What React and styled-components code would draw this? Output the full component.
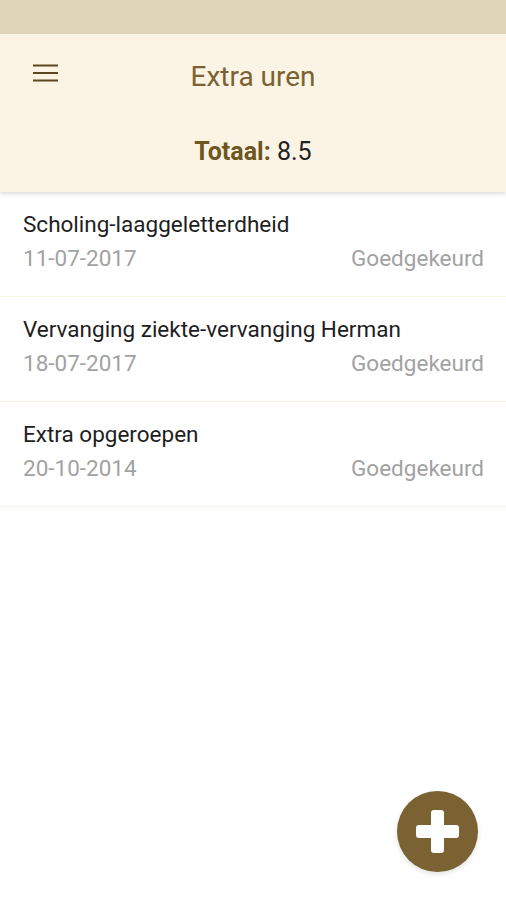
import React from "react";
import styled, { createGlobalStyle } from "styled-components";

const GlobalStyle = createGlobalStyle`
  html, body {
    margin: 0;
    padding: 0;
    background: #ffffff;
    font-family: Roboto, "Noto Sans", sans-serif;
  }
`;

const Screen = styled.div`
  position: relative;
  width: 506px;
  height: 900px;
  overflow: hidden;
  background: #ffffff;
`;

const StatusBar = styled.div`
  height: 34px;
  background: #e0d5b9;
`;

const Header = styled.header`
  background: #fbf4e4;
  box-shadow: 0 2px 4px rgba(0, 0, 0, 0.14);
  position: relative;
  z-index: 1;
`;

const Toolbar = styled.div`
  height: 84px;
  display: grid;
  grid-template-columns: 92px 1fr 92px;
  align-items: center;
`;

const MenuButton = styled.button`
  border: none;
  background: none;
  padding: 0 0 0 33px;
  height: 84px;
  display: flex;
  align-items: center;
  margin-top: -6px;
  cursor: pointer;
`;

const Title = styled.h1`
  margin: 0;
  text-align: center;
  font-size: 28px;
  font-weight: 400;
  color: #7a6233;
`;

const Total = styled.div`
  padding: 20px 0 26px;
  line-height: 28px;
  text-align: center;
  font-size: 25px;
  color: #222;
`;

const TotalLabel = styled.strong`
  font-weight: 700;
  color: #6f5522;
`;

const List = styled.ul`
  list-style: none;
  margin: 0;
  padding: 0;
`;

const Row = styled.li`
  height: 105px;
  box-sizing: border-box;
  padding: 19px 22px 0 23px;
  border-bottom: 1.5px solid #f8f3e3;
`;

const RowTitle = styled.div`
  font-size: 22.5px;
  line-height: 26px;
  color: #1e1e1e;
`;

const RowMeta = styled.div`
  margin-top: 8px;
  display: flex;
  justify-content: space-between;
  font-size: 22.5px;
  line-height: 26px;
  color: #a2a2a2;
`;

const Fab = styled.button`
  position: absolute;
  left: 397px;
  top: 791px;
  width: 81px;
  height: 81px;
  border-radius: 50%;
  border: none;
  background: #7b6232;
  display: flex;
  align-items: center;
  justify-content: center;
  box-shadow: 0 2px 5px rgba(0, 0, 0, 0.12);
  cursor: pointer;
`;

const items = [
  { title: "Scholing-laaggeletterdheid", date: "11-07-2017", status: "Goedgekeurd" },
  { title: "Vervanging ziekte-vervanging Herman", date: "18-07-2017", status: "Goedgekeurd" },
  { title: "Extra opgeroepen", date: "20-10-2014", status: "Goedgekeurd" },
];

const App = () => {
  return (
    <>
      <GlobalStyle />
      <Screen>
        <StatusBar />
        <Header>
          <Toolbar>
            <MenuButton aria-label="menu">
              <svg width="25" height="18" viewBox="0 0 25 18">
                <rect x="0" y="0.5" width="25" height="2" fill="#5c4720" />
                <rect x="0" y="8" width="25" height="2" fill="#5c4720" />
                <rect x="0" y="15.5" width="25" height="2" fill="#5c4720" />
              </svg>
            </MenuButton>
            <Title>Extra uren</Title>
            <span />
          </Toolbar>
          <Total>
            <TotalLabel>Totaal:</TotalLabel> 8.5
          </Total>
        </Header>

        <List>
          {items.map((item) => (
            <Row key={item.title}>
              <RowTitle>{item.title}</RowTitle>
              <RowMeta>
                <span>{item.date}</span>
                <span>{item.status}</span>
              </RowMeta>
            </Row>
          ))}
        </List>

        <Fab aria-label="toevoegen">
          <svg width="43" height="43" viewBox="0 0 43 43">
            <rect x="15" y="0" width="13" height="43" rx="3" fill="#ffffff" />
            <rect x="0" y="15" width="43" height="13" rx="3" fill="#ffffff" />
          </svg>
        </Fab>
      </Screen>
    </>
  );
};

export default App;
